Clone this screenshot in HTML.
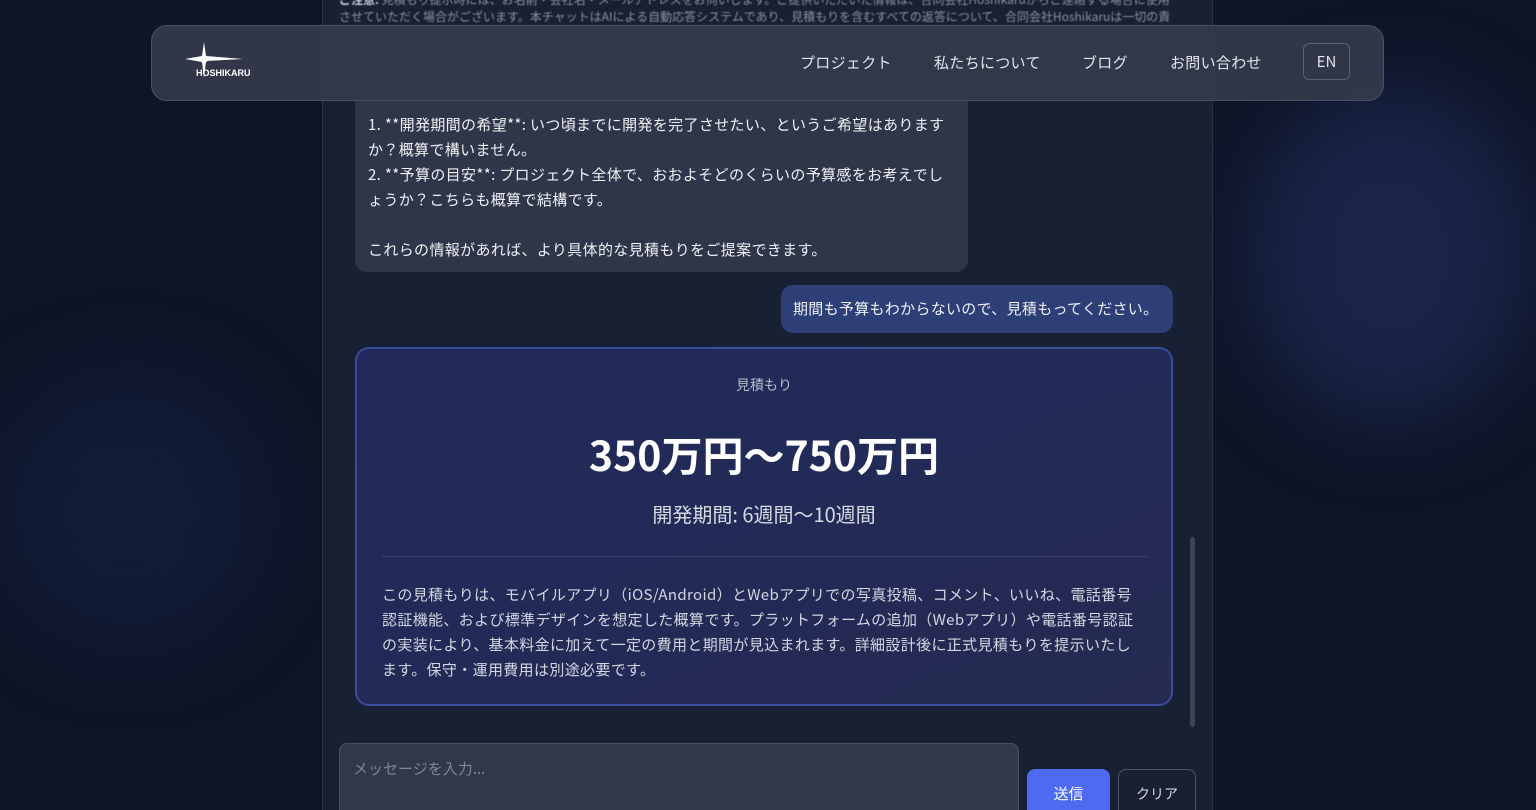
<!DOCTYPE html>
<html><head><meta charset="utf-8"><style>
*{box-sizing:border-box;margin:0;padding:0}
html,body{width:1536px;height:810px;overflow:hidden}
body{background:#0e1528;font-family:"Noto Sans CJK JP","Liberation Sans",sans-serif;position:relative}
.glow{position:absolute;border-radius:50%;filter:blur(40px)}
.panel{position:absolute;left:322px;top:-10px;width:891px;height:830px;background:#182033;border:1px solid #2a3246}
.a{position:absolute}
.top{left:339px;color:#8a92a5;font-size:12px;line-height:17px;white-space:nowrap;filter:blur(0.4px)}
.hdr{left:151px;top:25px;width:1233px;height:76px;border-radius:16px;background:rgba(52,58,75,0.93);border:1px solid #4a5163}
.nav{top:52px;color:#e2e5ec;font-size:15px;letter-spacing:0.3px}
.bub{left:355px;top:100px;width:613px;height:172px;background:#2f3649;border-radius:0 0 12px 12px;padding:12px 13px;color:#eef0f4;font-size:15px;line-height:25px;letter-spacing:0.35px}
.user{left:781px;top:285px;width:392px;height:48px;background:#2e3f78;border-radius:12px;color:#eef0f5;font-size:15px;line-height:48px;padding-left:12px;letter-spacing:0.3px}
.est{left:355px;top:347px;width:818px;height:359px;border:2px solid #3a4c9a;border-radius:14px;background:linear-gradient(160deg,#20295a,#232a56 60%,#252b50)}
</style></head><body>
<div class="glow" style="left:1250px;top:90px;width:280px;height:330px;background:#1a2448"></div>
<div class="glow" style="left:0;top:380px;width:260px;height:260px;background:#121c38"></div>
<div class="panel"></div>
<div class="a top" style="top:-9px"><b style="color:#c8cdd8">ご注意:</b> 見積もり提示時には、お名前・会社名・メールアドレスをお伺いします。ご提供いただいた情報は、合同会社Hoshikaruからご連絡する場合に使用</div>
<div class="a top" style="top:8px">させていただく場合がございます。本チャットはAIによる自動応答システムであり、見積もりを含むすべての返答について、合同会社Hoshikaruは一切の責</div>
<div class="a bub">1. **開発期間の希望**: いつ頃までに開発を完了させたい、というご希望はありますか？概算で構いません。<br>2. **予算の目安**: プロジェクト全体で、おおよそどのくらいの予算感をお考えでしょうか？こちらも概算で結構です。<br><br>これらの情報があれば、より具体的な見積もりをご提案できます。</div>
<div class="a hdr"></div>
<svg class="a" style="left:183px;top:40px" width="60" height="40" viewBox="0 0 60 40"><path d="M21 2 L23 16 L60 19 L23 21 L21 38 L19 22 L2 19 L19 16 Z" fill="#fff"/><circle cx="21" cy="19" r="4" fill="#fff"/></svg>
<div class="a" style="left:196px;top:68px;color:#fff;font-size:9px;font-weight:bold;font-family:'Liberation Sans',sans-serif">HOSHIKARU</div>
<div class="a nav" style="left:800px">プロジェクト</div>
<div class="a nav" style="left:934px">私たちについて</div>
<div class="a nav" style="left:1082px">ブログ</div>
<div class="a nav" style="left:1170px">お問い合わせ</div>
<div class="a" style="left:1303px;top:43px;width:47px;height:37px;border:1px solid #5b6275;border-radius:6px;color:#e2e5ec;font-size:15px;text-align:center;line-height:35px">EN</div>
<div class="a user">期間も予算もわからないので、見積もってください。</div>
<div class="a est">
<div class="a" style="left:0;width:814px;top:26px;text-align:center;color:#b6bccb;font-size:14px">見積もり</div>
<div class="a" style="left:0;width:814px;top:74px;text-align:center;color:#fff;font-size:41px;font-weight:bold;line-height:60px">350万円〜750万円</div>
<div class="a" style="left:0;width:814px;top:150px;text-align:center;color:#d7dbe4;font-size:20px;line-height:30px">開発期間: 6週間〜10週間</div>
<div class="a" style="left:25px;top:207px;width:765px;height:1px;background:#3e4670"></div>
<div class="a" style="left:25px;top:233px;width:757px;color:#d3d7e1;font-size:15px;line-height:25px;letter-spacing:0.35px">この見積もりは、モバイルアプリ（iOS/Android）とWebアプリでの写真投稿、コメント、いいね、電話番号認証機能、および標準デザインを想定した概算です。プラットフォームの追加（Webアプリ）や電話番号認証の実装により、基本料金に加えて一定の費用と期間が見込まれます。詳細設計後に正式見積もりを提示いたします。保守・運用費用は別途必要です。</div>
</div>
<div class="a" style="left:1190px;top:537px;width:5px;height:190px;background:#3c4456;border-radius:3px"></div>
<div class="a" style="left:339px;top:743px;width:680px;height:80px;background:#323848;border:1px solid #4a5062;border-radius:8px;padding:14px 13px;color:#7f8597;font-size:15px">メッセージを入力...</div>
<div class="a" style="left:1027px;top:769px;width:83px;height:50px;background:#4d6af0;border-radius:8px;color:#fff;font-size:15px;text-align:center;line-height:50px">送信</div>
<div class="a" style="left:1118px;top:769px;width:78px;height:50px;border:1px solid #4e5568;border-radius:8px;color:#d2d6df;font-size:14px;text-align:center;line-height:48px">クリア</div>
</body></html>
